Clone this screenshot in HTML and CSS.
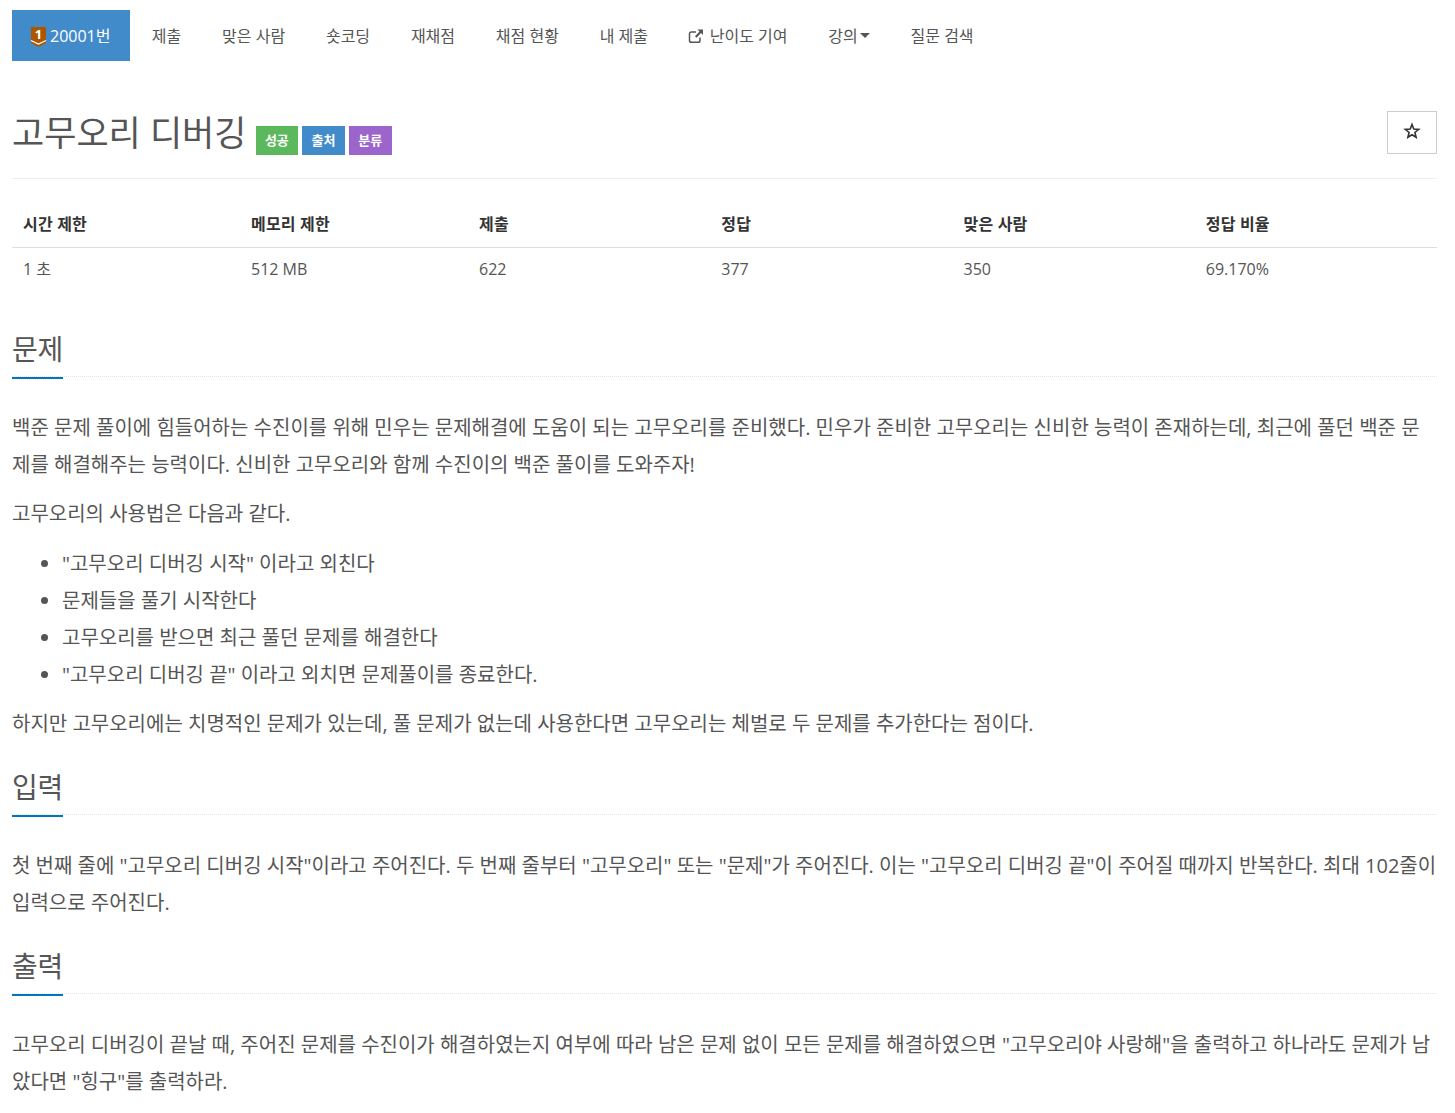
FILE: index.html
```html
<!DOCTYPE html>
<html lang="ko">
<head>
<meta charset="utf-8">
<title>고무오리 디버깅</title>
<link rel="stylesheet" href="styles.css">
</head>
<body>
<nav class="nav">
  <a class="nav-item active"><svg class="tier" viewBox="0 0 15 20" width="15" height="20"><path d="M0 0h15v16l-7.500 4L0 16z" fill="#ad5600"/><path d="M0 13.500l7.500 3.500 7.500-3.500" fill="none" stroke="#fff" stroke-width="1.200"/><text x="7.500" y="11.500" class="tier-num">1</text></svg>20001번</a>
  <a class="nav-item">제출</a>
  <a class="nav-item">맞은 사람</a>
  <a class="nav-item">숏코딩</a>
  <a class="nav-item">재채점</a>
  <a class="nav-item">채점 현황</a>
  <a class="nav-item">내 제출</a>
  <a class="nav-item"><svg class="ext" viewBox="0 0 16 16" width="16" height="16"><path d="M12 9.500v3a1.800 1.800 0 0 1-1.800 1.800H3.300a1.800 1.800 0 0 1-1.800-1.800V5.800A1.800 1.800 0 0 1 3.300 4H8" fill="none" stroke="#555" stroke-width="1.500"/><path d="M9.500 1.500H15V7l-2-2-4.500 4.700-1.500-1.500L11.500 3.500z" fill="#555"/></svg>난이도 기여</a>
  <a class="nav-item">강의<span class="caret"></span></a>
  <a class="nav-item">질문 검색</a>
</nav>

<header class="title-row">
  <h1 class="title">고무오리 디버깅</h1>
  <div class="labels">
    <span class="label green">성공</span>
    <span class="label blue">출처</span>
    <span class="label purple">분류</span>
  </div>
  <button class="star" aria-label="즐겨찾기"><svg viewBox="0 0 18 18" width="18" height="18"><path d="M9 2.500l1.800 4.600 4.900.3-3.800 3.100 1.200 4.800L9 12.700l-4.100 2.600 1.200-4.800-3.800-3.100 4.900-.3z" fill="none" stroke="#333" stroke-width="1.600" stroke-linejoin="miter"/></svg></button>
</header>

<table class="info">
  <thead>
    <tr><th>시간 제한</th><th>메모리 제한</th><th>제출</th><th>정답</th><th>맞은 사람</th><th>정답 비율</th></tr>
  </thead>
  <tbody>
    <tr><td>1 초</td><td>512 MB</td><td>622</td><td>377</td><td>350</td><td>69.170%</td></tr>
  </tbody>
</table>

<section class="sec first">
  <h2 class="sec-head"><span>문제</span></h2>
  <div class="sec-body">
    <p>백준 문제 풀이에 힘들어하는 수진이를 위해 민우는 문제해결에 도움이 되는 고무오리를 준비했다. 민우가 준비한 고무오리는 신비한 능력이 존재하는데, 최근에 풀던 백준 문제를 해결해주는 능력이다. 신비한 고무오리와 함께 수진이의 백준 풀이를 도와주자!</p>
    <p>고무오리의 사용법은 다음과 같다.</p>
    <ul>
      <li>"고무오리 디버깅 시작" 이라고 외친다</li>
      <li>문제들을 풀기 시작한다</li>
      <li>고무오리를 받으면 최근 풀던 문제를 해결한다</li>
      <li>"고무오리 디버깅 끝" 이라고 외치면 문제풀이를 종료한다.</li>
    </ul>
    <p>하지만 고무오리에는 치명적인 문제가 있는데, 풀 문제가 없는데 사용한다면 고무오리는 체벌로 두 문제를 추가한다는 점이다.</p>
  </div>
</section>

<section class="sec">
  <h2 class="sec-head"><span>입력</span></h2>
  <div class="sec-body">
    <p>첫 번째 줄에 "고무오리 디버깅 시작"이라고 주어진다. 두 번째 줄부터 "고무오리" 또는 "문제"가 주어진다. 이는 "고무오리 디버깅 끝"이 주어질 때까지 반복한다. 최대 102줄이 입력으로 주어진다.</p>
  </div>
</section>

<section class="sec">
  <h2 class="sec-head"><span>출력</span></h2>
  <div class="sec-body">
    <p>고무오리 디버깅이 끝날 때, 주어진 문제를 수진이가 해결하였는지 여부에 따라 남은 문제 없이 모든 문제를 해결하였으면 "고무오리야 사랑해"을 출력하고 하나라도 문제가 남았다면 "힝구"를 출력하라.</p>
  </div>
</section>
</body>
</html>
```

FILE: styles.css
```css
* { box-sizing: border-box; }
html, body { margin: 0; }
body {
  padding: 10px 18px 0 12px;
  font-family: "Open Sans", "Noto Sans CJK KR", sans-serif;
  font-size: 14px;
  line-height: 20px;
  color: #555;
  background: #fff;
  overflow: hidden;
  height: 1113px;
}
.nav { display: flex; height: 51px; }
.nav-item {
  display: flex;
  align-items: center;
  padding: 0 20.4px;
  font-size: 16px;
  color: #555;
  white-space: nowrap;
}
.nav-item.active { background: #428bca; color: #fff; margin-right: 1px; padding: 0 20px 0 19px; }
.tier { margin: 3px 4px 0 0; overflow: visible; }
.tier-num { font: 700 13px "Open Sans", sans-serif; fill: #fff; text-anchor: middle; }
.ext { margin: 0 6px 0 -1px; }
.caret {
  display: inline-block;
  margin-left: 2px;
  border-top: 5px solid #555;
  border-left: 5px solid transparent;
  border-right: 5px solid transparent;
}
.title-row {
  display: flex;
  align-items: flex-end;
  margin-top: 50px;
  height: 68px;
  padding-bottom: 23px;
  border-bottom: 1px solid #eee;
}
.title { margin: 0 0 2px; font-size: 35px; line-height: 40px; font-weight: 400; color: #555; }
.labels { display: flex; gap: 4px; margin-left: 9px; }
.label {
  display: block;
  height: 29px;
  padding: 0 9.4px;
  font-size: 13px;
  line-height: 29px;
  font-weight: 700;
  color: #fff;
}
.green { background: #5cb85c; }
.blue { background: #428bca; }
.purple { background: #9b65cb; }
.star {
  display: flex;
  align-items: center;
  justify-content: center;
  margin-left: auto;
  width: 50px;
  height: 43px;
  align-self: flex-start;
  border: 1px solid #ccc;
  background: #fff;
  padding: 0 0 4px;
}
.info { width: 100%; border-collapse: collapse; table-layout: fixed; margin-top: 20px; font-size: 16px; }
.info th:nth-child(-n+2) { width: 16%; }
.info th { width: 17%; text-align: left; font-weight: 700; color: #333; padding: 15px 11px 12px; height: 48px; line-height: 20px; letter-spacing: 0.2px; border-bottom: 1px solid #ddd; }
.info td { padding: 11px; line-height: 20px; height: 43px; }
.sec { margin-top: 32px; }
.sec.first { margin-top: 46px; }
.sec-head {
  margin: 0;
  height: 41px;
  font-size: 28px;
  line-height: 27px;
  letter-spacing: -0.25px;
  font-weight: 400;
  color: #555;
  border-bottom: 1px dotted #e5e5e5;
}
.sec-head span {
  display: inline-block;
  height: 43px;
  border-bottom: 2px solid #0076c0;
}
.sec-body { margin-top: 32px; font-size: 20px; line-height: 37px; }
.sec-body p { margin: 0 0 12px; }
.sec-body ul { margin: 13px 0 12px; padding-left: 50px; }
```
